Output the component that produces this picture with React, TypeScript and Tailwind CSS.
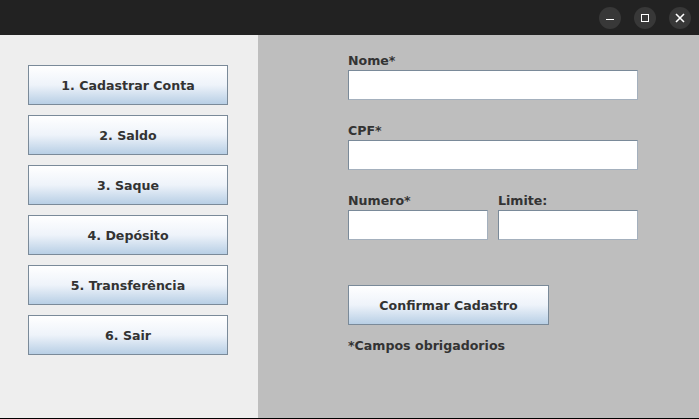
import React from "react";

const font = { fontFamily: '"DejaVu Sans", sans-serif' };

function SwingButton({ label, w }: { label: string; w: string }) {
  return (
    <div
      className={`${w} h-[40px] flex items-center justify-center border border-[#7a8a99] bg-gradient-to-b from-[#ffffff] via-[#eef3fa] to-[#b8cfe5] text-[12.6px] font-bold text-[#333333] pt-[3px]`}
    >
      {label}
    </div>
  );
}

function Field({ label, w }: { label: string; w: string }) {
  return (
    <div className="flex flex-col">
      <div className="h-[15px] leading-[11px] text-[12.6px] font-bold text-[#333333]">{label}</div>
      <div className={`${w} h-[30px] bg-white border border-[#7a8a99] border-r-[#a4b0bd] border-b-[#a4b0bd]`} />
    </div>
  );
}

export default function App() {
  const buttons = [
    "1. Cadastrar Conta",
    "2. Saldo",
    "3. Saque",
    "4. Depósito",
    "5. Transferência",
    "6. Sair",
  ];
  return (
    <div className="w-[699px] h-[419px] flex flex-col bg-[#222222] overflow-hidden" style={font}>
      <div className="h-[35px] flex items-center justify-end gap-[13px] pr-[8px] bg-[#222222]">
        <div className="w-[22px] h-[22px] rounded-full bg-[#383838] flex items-center justify-center">
          <div className="w-[8px] h-[1.5px] bg-white mt-[4px]" />
        </div>
        <div className="w-[22px] h-[22px] rounded-full bg-[#383838] flex items-center justify-center">
          <div className="w-[8px] h-[8px] border-[1.5px] border-white" />
        </div>
        <div className="w-[22px] h-[22px] rounded-full bg-[#383838] flex items-center justify-center">
          <svg width="10" height="10" viewBox="0 0 10 10">
            <path d="M1 1 L9 9 M9 1 L1 9" stroke="white" strokeWidth="1.6" />
          </svg>
        </div>
      </div>
      <div className="flex h-[383px] mx-0">
        <div className="w-[258px] bg-[#eeeeee] flex flex-col gap-[10px] pl-[28px] pt-[30px]">
          {buttons.map((b) => (
            <SwingButton key={b} label={b} w="w-[200px]" />
          ))}
        </div>
        <div className="flex-1 bg-[#bebebe] pl-[90px] pt-[20px] flex flex-col">
          <Field label="Nome*" w="w-[290px]" />
          <div className="h-[25px]" />
          <Field label="CPF*" w="w-[290px]" />
          <div className="h-[25px]" />
          <div className="flex gap-[10px]">
            <Field label="Numero*" w="w-[140px]" />
            <Field label="Limite:" w="w-[140px]" />
          </div>
          <div className="h-[45px]" />
          <SwingButton label="Confirmar Cadastro" w="w-[201px]" />
          <div className="mt-[13px] text-[12.6px] font-bold text-[#333333] leading-[15px]">*Campos obrigadorios</div>
        </div>
      </div>
      <div className="h-[1px] bg-black" />
    </div>
  );
}
